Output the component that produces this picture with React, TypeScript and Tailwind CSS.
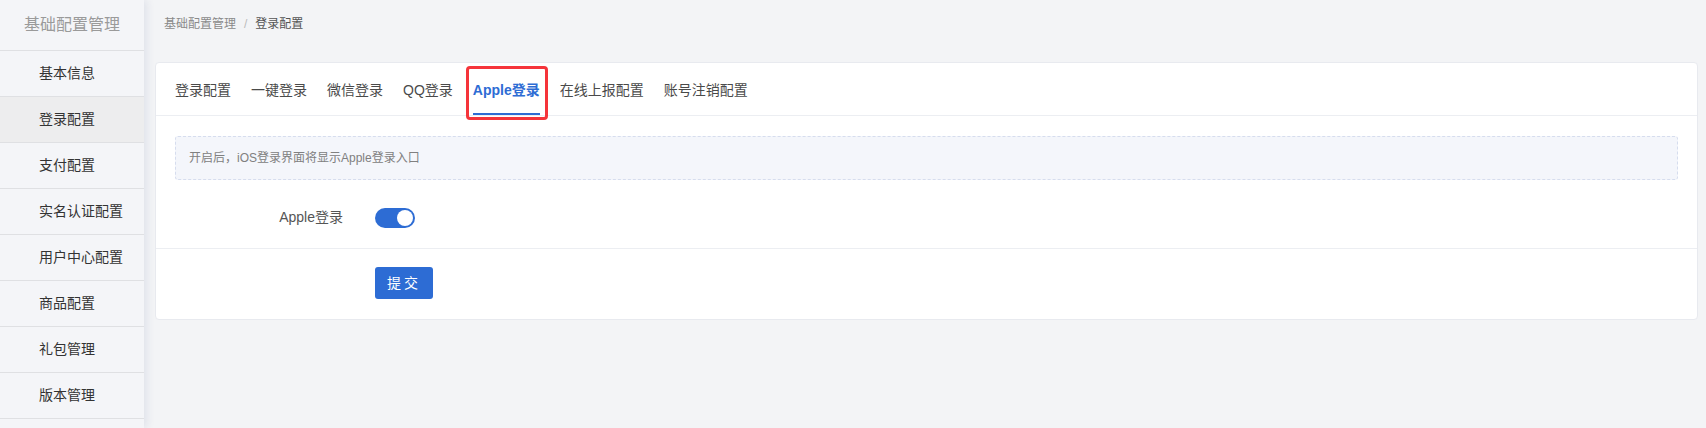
import { useState } from "react";

const menu = [
  "基本信息",
  "登录配置",
  "支付配置",
  "实名认证配置",
  "用户中心配置",
  "商品配置",
  "礼包管理",
  "版本管理",
];

const tabs = ["登录配置", "一键登录", "微信登录", "QQ登录", "Apple登录", "在线上报配置", "账号注销配置"];

function Sidebar() {
  return (
    <div className="relative z-10 w-[144px] shrink-0 bg-[#f4f5f8] shadow-[3px_0_8px_rgba(30,50,120,0.09)]">
      <div className="flex h-[51px] items-center justify-center border-b border-[#dfe0e3] text-[16px] text-[#9a9a9a]">
        基础配置管理
      </div>
      {menu.map((item) => (
        <div
          key={item}
          className={
            item === "登录配置"
              ? "flex h-[46px] items-center border-b border-[#dfe0e3] bg-[#ededee] pl-[39px] text-[14px] text-[#333]"
              : "flex h-[46px] items-center border-b border-[#dfe0e3] pl-[39px] text-[14px] text-[#333]"
          }
        >
          {item}
        </div>
      ))}
    </div>
  );
}

function Toggle() {
  const [on, setOn] = useState(true);
  return (
    <button
      onClick={() => setOn(!on)}
      className={
        on
          ? "relative ml-[32px] flex h-[20px] w-[40px] items-center rounded-full bg-[#2d6cd4]"
          : "relative ml-[32px] flex h-[20px] w-[40px] items-center rounded-full bg-[#c8ccd4]"
      }
    >
      <span
        className={
          on
            ? "absolute right-[2px] h-[16px] w-[16px] rounded-full bg-white"
            : "absolute left-[2px] h-[16px] w-[16px] rounded-full bg-white"
        }
      />
    </button>
  );
}

export default function App() {
  const [active, setActive] = useState("Apple登录");
  return (
    <div className="flex h-[428px] w-full overflow-hidden bg-[#f3f4f6] font-['Liberation_Sans','Noto_Sans_CJK_SC',sans-serif]">
      <Sidebar />
      <div className="flex-1 pl-[11px] pr-[8px]">
        <div className="flex h-[48px] items-center gap-[8px] pl-[9px] text-[12px]">
          <span className="text-[#8a8a8a]">基础配置管理</span>
          <span className="text-[#bbb]">/</span>
          <span className="text-[#555]">登录配置</span>
        </div>
        <div className="mt-[14px] rounded-[4px] border border-[#e8eaef] bg-white">
          <div className="flex h-[53px] gap-[20px] border-b border-[#eceef2] px-[19px]">
            {tabs.map((t) => (
              <div
                key={t}
                onClick={() => setActive(t)}
                className={
                  t === active
                    ? "relative flex cursor-pointer items-center border-b-2 border-[#2d6cd4] pt-[4px] text-[14px] font-bold text-[#2d6cd4]"
                    : "relative flex cursor-pointer items-center border-b-2 border-transparent pt-[4px] text-[14px] text-[#4a4a4a]"
                }
              >
                {t}
                {t === "Apple登录" && (
                  <span className="absolute -left-[7px] -right-[8px] top-[3px] -bottom-[7px] rounded-[4px] border-[3px] border-[#f5343a]" />
                )}
              </div>
            ))}
          </div>
          <div className="border-b border-[#eceef2] px-[19px] pb-[20px] pt-[20px]">
            <div className="flex h-[44px] items-center rounded-[3px] border border-dashed border-[#d6ddee] bg-[#f4f6fb] pl-[13px] text-[12px] text-[#808080]">
              开启后，iOS登录界面将显示Apple登录入口
            </div>
            <div className="mt-[27px] flex items-center">
              <label className="w-[168px] text-right text-[14px] text-[#555]">Apple登录</label>
              <Toggle />
            </div>
          </div>
          <div className="pb-[20px] pl-[219px] pt-[18px]">
            <button className="h-[32px] w-[58px] rounded-[3px] bg-[#2d6cd4] text-[14px] tracking-[3px] text-white">
              提交
            </button>
          </div>
        </div>
      </div>
    </div>
  );
}
